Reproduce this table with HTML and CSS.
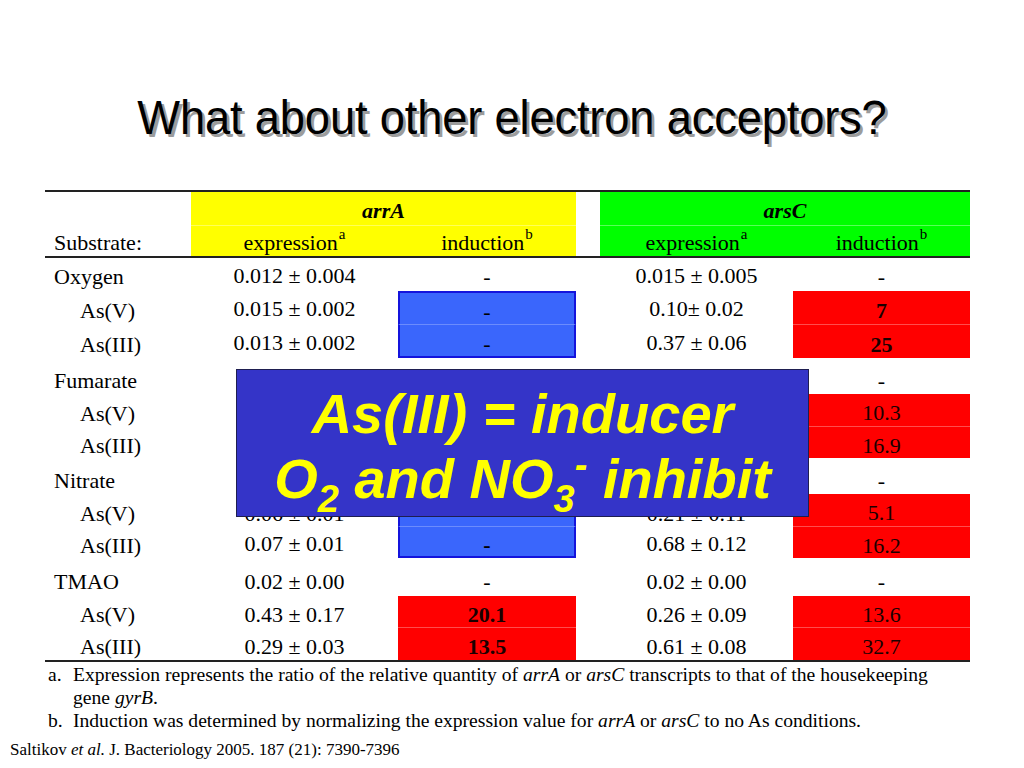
FILE: index.html
```html
<!DOCTYPE html>
<html>
<head>
<meta charset="utf-8">
<link rel="stylesheet" href="styles.css">
</head>
<body>
<div class="slide">
  <h1 class="title"><span class="title-text">What about other electron acceptors?</span></h1>

  <div class="table">
    <div class="thead">
      <div class="c"></div>
      <div class="c hy span2 gene">arrA</div>
      <div class="c"></div>
      <div class="c hg span2 gene">arsC</div>

      <div class="c lab">Substrate:</div>
      <div class="c hy2 num">expression<sup>a</sup></div>
      <div class="c hy2 num">induction<sup>b</sup></div>
      <div class="c"></div>
      <div class="c hg2 num">expression<sup>a</sup></div>
      <div class="c hg2 num">induction<sup>b</sup></div>
    </div>

    <div class="tbody">
      <!-- Oxygen -->
      <div class="c lab g1">Oxygen</div>
      <div class="c num g1 up">0.012 ± 0.004</div>
      <div class="c num g1">-</div>
      <div class="c"></div>
      <div class="c num g1 up">0.015 ± 0.005</div>
      <div class="c num g1">-</div>

      <div class="c lab sub">As(V)</div>
      <div class="c num up">0.015 ± 0.002</div>
      <div class="c num blue bt">-</div>
      <div class="c"></div>
      <div class="c num up">0.10± 0.02</div>
      <div class="c num red rt b">7</div>

      <div class="c lab sub">As(III)</div>
      <div class="c num up">0.013 ± 0.002</div>
      <div class="c num blue bb">-</div>
      <div class="c"></div>
      <div class="c num up">0.37 ± 0.06</div>
      <div class="c num red b">25</div>

      <!-- Fumarate (values hidden under the callout) -->
      <div class="c lab g2">Fumarate</div>
      <div class="c"></div>
      <div class="c"></div>
      <div class="c"></div>
      <div class="c"></div>
      <div class="c num g2">-</div>

      <div class="c lab sub">As(V)</div>
      <div class="c"></div>
      <div class="c red rt"></div>
      <div class="c"></div>
      <div class="c"></div>
      <div class="c num red rt">10.3</div>

      <div class="c lab sub">As(III)</div>
      <div class="c"></div>
      <div class="c red"></div>
      <div class="c"></div>
      <div class="c"></div>
      <div class="c num red">16.9</div>

      <!-- Nitrate -->
      <div class="c lab g2">Nitrate</div>
      <div class="c"></div>
      <div class="c"></div>
      <div class="c"></div>
      <div class="c"></div>
      <div class="c num g2">-</div>

      <div class="c lab sub">As(V)</div>
      <div class="c num">0.06 ± 0.01</div>
      <div class="c num blue bt">-</div>
      <div class="c"></div>
      <div class="c num">0.21 ± 0.11</div>
      <div class="c num red rt">5.1</div>

      <div class="c lab sub">As(III)</div>
      <div class="c num up">0.07 ± 0.01</div>
      <div class="c num blue bb b">-</div>
      <div class="c"></div>
      <div class="c num up">0.68 ± 0.12</div>
      <div class="c num red">16.2</div>

      <!-- TMAO -->
      <div class="c lab g2">TMAO</div>
      <div class="c num g2">0.02 ± 0.00</div>
      <div class="c num g2">-</div>
      <div class="c"></div>
      <div class="c num g2">0.02 ± 0.00</div>
      <div class="c num g2">-</div>

      <div class="c lab sub">As(V)</div>
      <div class="c num">0.43 ± 0.17</div>
      <div class="c num red rt b">20.1</div>
      <div class="c"></div>
      <div class="c num">0.26 ± 0.09</div>
      <div class="c num red rt">13.6</div>

      <div class="c lab sub">As(III)</div>
      <div class="c num">0.29 ± 0.03</div>
      <div class="c num red b">13.5</div>
      <div class="c"></div>
      <div class="c num">0.61 ± 0.08</div>
      <div class="c num red">32.7</div>
    </div>
  </div>

  <div class="notes">
    <div class="mk">a.</div>
    <div class="nt">Expression represents the ratio of the relative quantity of <i>arrA</i> or <i>arsC</i> transcripts to that of the housekeeping gene <i>gyrB</i>.</div>
    <div class="mk">b.</div>
    <div class="nt">Induction was determined by normalizing the expression value for <i>arrA</i> or <i>arsC</i> to no As conditions.</div>
  </div>

  <div class="cite">Saltikov <i>et al.</i> J. Bacteriology 2005. 187 (21): 7390-7396</div>

  <div class="callout">
    <div class="cl">As(III) = inducer</div>
    <div class="cl">O<sub>2</sub> and NO<sub>3</sub><sup>-</sup> inhibit</div>
  </div>
</div>
</body>
</html>
```

FILE: styles.css
```css
html, body {
  margin: 0;
  padding: 0;
  background: #ffffff;
}

.slide {
  position: relative;
  width: 1024px;
  height: 768px;
  overflow: hidden;
  font-family: "Liberation Serif", "Times New Roman", serif;
  color: #000;
}

.title {
  margin: 0;
  padding-top: 87px;
  height: 60px;
  line-height: 60px;
  text-align: center;
  font-family: "Liberation Sans", Arial, sans-serif;
  font-weight: normal;
  font-size: 49px;
}

.title-text {
  display: inline-block;
  transform: scaleX(0.925);
  text-shadow: 3px 3px 0 #9c9c9c;
  letter-spacing: -0.2px;
}

.table {
  margin: 43px 54px 0 45px;
  font-size: 22px;
}

.thead,
.tbody {
  display: grid;
  grid-template-columns: 146px 207px 178px 24px 193px 177px;
}

.thead {
  border-top: 2px solid #222;
  border-bottom: 2px solid #222;
  grid-template-rows: 34px 30px;
}

.tbody {
  border-bottom: 2px solid #222;
  grid-template-rows: 33px 34px 33px 36px 33px 31px 36px 33px 31px 38px 32px 32px;
}

.c {
  box-sizing: border-box;
  display: flex;
  align-items: center;
  padding-top: 6px;
  white-space: nowrap;
  line-height: 1;
}

.span2 {
  grid-column: span 2;
}

.gene {
  justify-content: center;
  font-weight: bold;
  font-style: italic;
  padding-top: 4px;
  border-bottom: 1px solid rgba(255, 255, 255, 0.35);
}

.hy, .hy2 { background: #ffff00; }
.hg, .hg2 { background: #00ff00; }
.hy2, .hg2 { padding-top: 3px; }

.thead .lab { padding-top: 3px; }

.thead sup {
  font-size: 15px;
  position: relative;
  top: -9px;
  vertical-align: baseline;
  line-height: 0;
  margin-left: 1px;
}

.lab {
  padding-left: 9px;
}

.lab.sub {
  padding-left: 35px;
}

.num {
  justify-content: center;
}

.g1 { padding-top: 5px; }
.g2 { padding-top: 10px; }
.num.up { padding-top: 2px; }

.blue {
  background: #3a66fc;
  border-left: 2px solid #1414dc;
  border-right: 2px solid #1414dc;
}
.blue.bt {
  border-top: 2px solid #1414dc;
  border-bottom: 1px solid rgba(255, 255, 255, 0.25);
}
.blue.bb {
  border-bottom: 2px solid #1414dc;
}

.red {
  background: #ff0000;
  color: #1a0000;
}
.red.rt {
  border-bottom: 1px solid rgba(255, 255, 255, 0.3);
}

.b { font-weight: bold; }

.notes {
  display: grid;
  grid-template-columns: 25px 880px;
  margin: 1px 0 0 48px;
  font-size: 19.6px;
  line-height: 23px;
}

.cite {
  margin: 8px 0 0 10px;
  font-size: 17px;
  line-height: 20px;
}

.callout {
  position: absolute;
  left: 236px;
  top: 369px;
  width: 573px;
  height: 148px;
  box-sizing: border-box;
  padding-top: 11px;
  background: #3434c8;
  border: 1px solid #1e1e50;
  color: #ffff00;
  font-family: "Liberation Sans", Arial, sans-serif;
  font-weight: bold;
  font-style: italic;
  font-size: 56px;
  line-height: 65px;
  text-align: center;
}

.callout sub {
  font-size: 38px;
  vertical-align: -14px;
  line-height: 0;
}

.callout sup {
  font-size: 38px;
  vertical-align: 20px;
  line-height: 0;
}
```
